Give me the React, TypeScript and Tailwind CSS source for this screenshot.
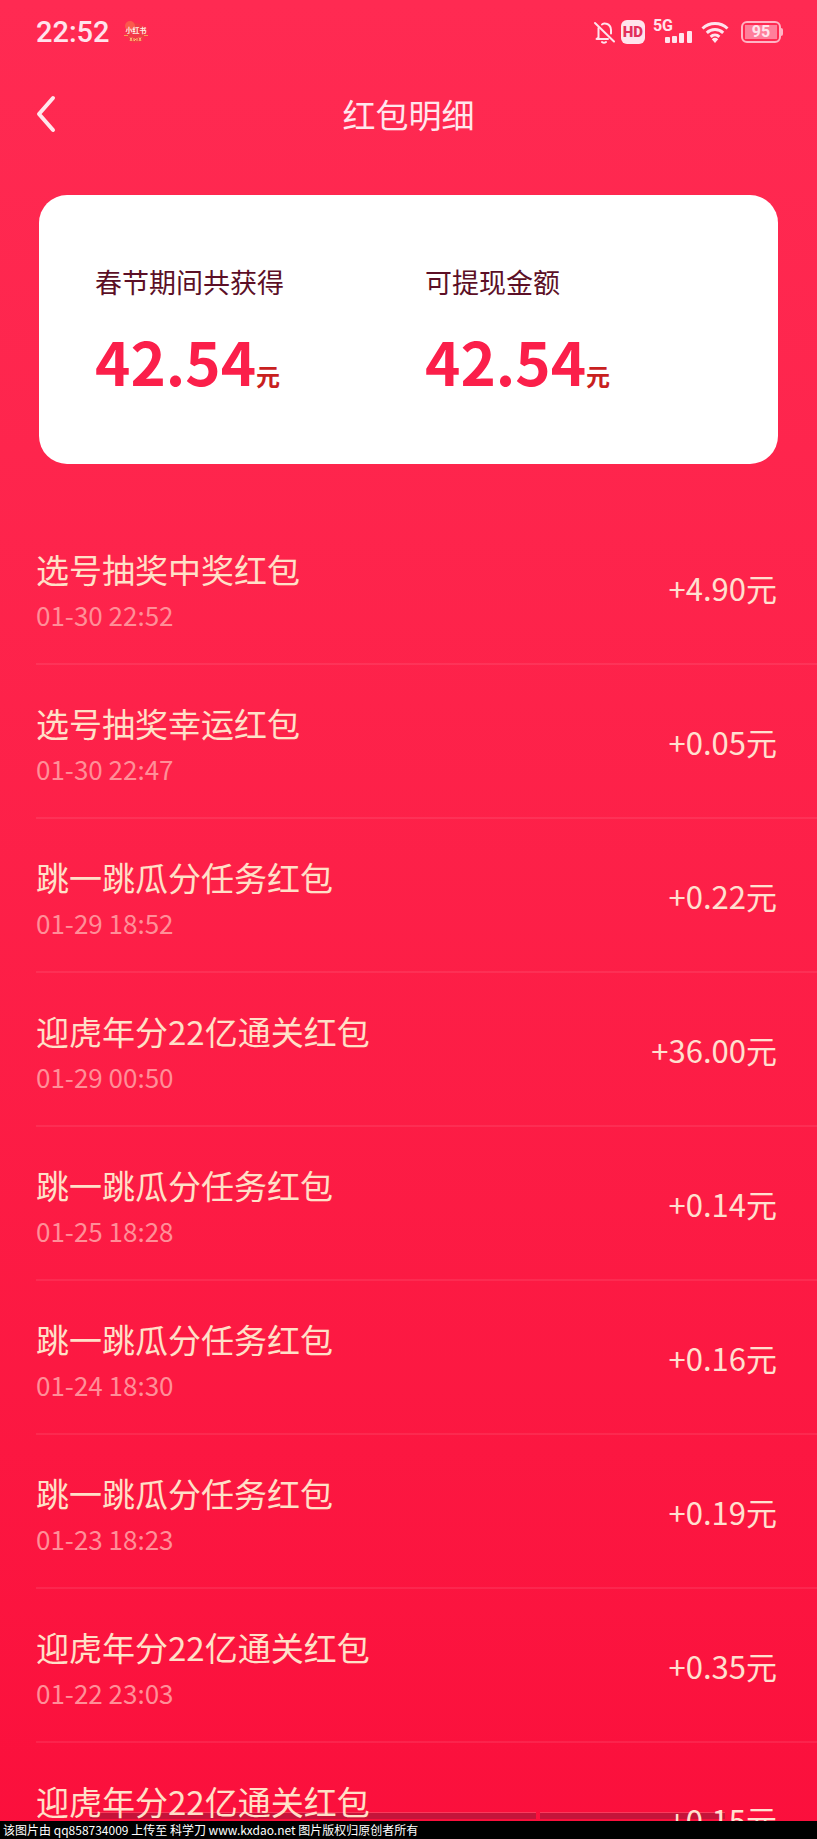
const TOTALS = [
  { label: "春节期间共获得", value: "42.54" },
  { label: "可提现金额", value: "42.54" },
];

const RECORDS = [
  { title: "选号抽奖中奖红包", time: "01-30 22:52", amount: "+4.90元" },
  { title: "选号抽奖幸运红包", time: "01-30 22:47", amount: "+0.05元" },
  { title: "跳一跳瓜分任务红包", time: "01-29 18:52", amount: "+0.22元" },
  { title: "迎虎年分22亿通关红包", time: "01-29 00:50", amount: "+36.00元" },
  { title: "跳一跳瓜分任务红包", time: "01-25 18:28", amount: "+0.14元" },
  { title: "跳一跳瓜分任务红包", time: "01-24 18:30", amount: "+0.16元" },
  { title: "跳一跳瓜分任务红包", time: "01-23 18:23", amount: "+0.19元" },
  { title: "迎虎年分22亿通关红包", time: "01-22 23:03", amount: "+0.35元" },
  { title: "迎虎年分22亿通关红包", time: "", amount: "+0.15元" },
];

function StatusBar() {
  return (
    <div className="flex h-16 shrink-0 items-center pr-[34px] pl-9 font-['Roboto',sans-serif] text-[#ffe3ec]">
      <span className="text-[29px] leading-8 font-medium">22:52</span>
      <svg className="ml-[14px] h-6 w-6" viewBox="0 0 24 24" aria-hidden="true">
        <circle cx="12" cy="13" r="10" fill="#f23a48" />
        <circle cx="6" cy="6" r="5" fill="#fb5a4c" />
        <text x="12" y="13" textAnchor="middle" fontFamily="Noto Sans CJK SC" fontSize="7" fontWeight="700" fill="#ffeee6">小红书</text>
        <path d="M0 15.500h4M20 15.500h4" stroke="#f8a24e" />
        <path d="M6 17.500l2 3.500M8 17.500l-2 3.500M10 18v3l2-2M13 18v3M15 17.500l2 3.500M17 17.500l-2 3.500" stroke="#ffc070" fill="none" />
      </svg>

      <div className="ml-auto flex items-center">
        {/* muted bell */}
        <svg className="h-6 w-6" viewBox="0 0 24 24" fill="none" stroke="currentColor" strokeWidth="2" strokeLinecap="round" strokeLinejoin="round" aria-hidden="true">
          <path d="M2 3l19 18.500" />
          <path d="M5.500 8v9.500L3.500 19H15" />
          <path d="M9 4.500C10 3.200 12.500 3.200 13.500 3.800c3 1 4.500 3.400 4.500 6.200v3.500" />
          <path d="M9 22c1 .8 3 .8 4 0" />
        </svg>
        <span className="ml-1 flex h-6 w-6 items-center justify-center rounded-md bg-[#ffe3ec] text-[15px] leading-6 font-black text-[#e22f5a]">HD</span>
        <div className="ml-2 flex h-6 items-start">
          <span className="text-base leading-3 font-bold">5G</span>
          <svg className="-ml-2 h-6 w-7" viewBox="0 0 28 24" fill="currentColor" aria-hidden="true">
            <rect x="0" y="17" width="5" height="6" rx="1" />
            <rect x="7" y="16" width="5" height="7" rx="1" />
            <rect x="14" y="13" width="5" height="10" rx="1" />
            <rect x="22" y="11" width="5" height="12" rx="1" />
          </svg>
        </div>
        <svg className="ml-2 h-6 w-7" viewBox="0 0 28 24" fill="none" stroke="currentColor" strokeWidth="3" aria-hidden="true">
          <path d="M1.500 8.500a18 18 0 0 1 25 0" />
          <path d="M5.800 12.800a12 12 0 0 1 16.400 0" />
          <path d="M9.600 16.800a6.500 6.500 0 0 1 8.800 0" />
          <path d="M10.800 19.200a5 5 0 0 1 6.400 0L14 23z" fill="currentColor" stroke="none" />
        </svg>
        <div className="ml-3 flex items-center">
          <div className="flex h-[22px] w-10 rounded-md border-2 border-[#ffb4c4] p-[2px]">
            <span className="flex flex-1 items-center justify-center bg-[#ff7f9b] text-base leading-4 font-bold">95</span>
          </div>
          <div className="h-2 w-[2px] rounded-r bg-[#ffb4c4]" />
        </div>
      </div>
    </div>
  );
}

export default function App() {
  return (
    <div className="flex h-screen flex-col overflow-hidden bg-linear-to-b from-[#ff2a52] to-[#fb0f3c] font-['Noto_Sans_CJK_SC',sans-serif]">
      <StatusBar />

      <header className="grid h-[100px] shrink-0 grid-cols-3 items-center px-9 text-[#ffe6ec]">
        <button type="button" aria-label="返回" className="w-6">
          <svg className="h-10 w-6" viewBox="0 0 24 40" fill="none" stroke="currentColor" strokeWidth="4" strokeLinecap="round" strokeLinejoin="round">
            <path d="M17 4L3 20l14 16" />
          </svg>
        </button>
        <h1 className="text-center text-[33px] leading-10">红包明细</h1>
      </header>

      <main className="flex min-h-0 flex-1 flex-col">
        <section className="mx-[39px] mt-[31px] grid h-[269px] shrink-0 grid-cols-[330px_1fr] rounded-[28px] bg-white px-14 pt-[67px]">
          {TOTALS.map((t) => (
            <div key={t.label}>
              <p className="text-[27px] leading-10 text-[#5c0f26]">{t.label}</p>
              <p className="mt-[18px] text-[60px] leading-20 font-bold text-[#fb1f4a]">
                {t.value}
                <span className="text-2xl text-[#c8201e]">元</span>
              </p>
            </div>
          ))}
        </section>

        <div className="relative mt-[47px] min-h-0 flex-1 overflow-hidden">
          {/* shaded strip along the bottom edge, under the rows */}
          <div className="absolute inset-x-0 bottom-[2px] flex h-[7px] gap-1 pr-[92px] pl-[90px]">
            <div className="w-[446px] border-t border-[#fb3a5c] bg-[#c5143a]" />
            <div className="flex-1 border-t border-[#fb3a5c] bg-[#c5143a]" />
          </div>
          <ul className="relative pl-9">
            {RECORDS.map((r, i) => (
              <li key={i} className="flex h-[154px] items-center justify-between border-b-2 border-white/8 pr-10">
                <div className="pt-2">
                  <h2 className="text-[33px] leading-12 text-[#ffe0c8]">{r.title}</h2>
                  <p className="h-11 text-[26px] leading-11 text-[#ff8f98]">{r.time}</p>
                </div>
                <span className="pt-[2px] text-[31px] leading-12 text-[#ffe0d0]">{r.amount}</span>
              </li>
            ))}
          </ul>
        </div>
      </main>

      <footer className="h-[18px] shrink-0 bg-black px-[3px] text-xs leading-[18px] text-white">
        该图片由 qq858734009 上传至 科学刀 www.kxdao.net 图片版权归原创者所有
      </footer>
    </div>
  );
}
